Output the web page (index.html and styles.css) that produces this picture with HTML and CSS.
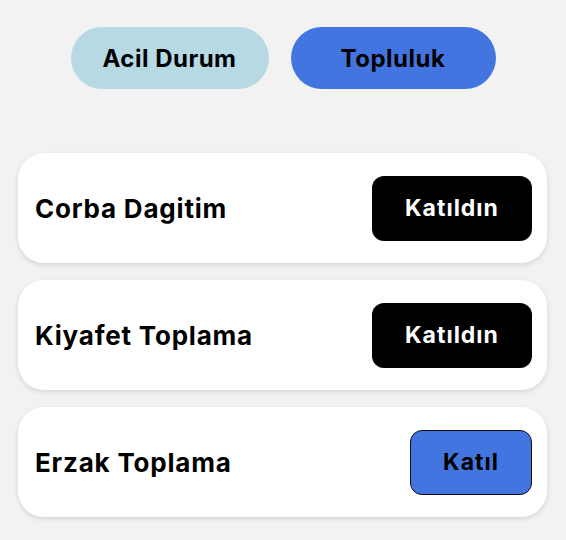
FILE: index.html
```html
<!DOCTYPE html>
<html lang="tr">
<head>
<meta charset="utf-8">
<link rel="stylesheet" href="styles.css">
</head>
<body>
<div class="page">
  <div class="tabs">
    <button class="pill pill-light">Acil Durum</button>
    <button class="pill pill-blue">Topluluk</button>
  </div>
  <div class="list">
    <div class="card">
      <span class="title">Corba Dagitim</span>
      <button class="act joined">Katıldın</button>
    </div>
    <div class="card">
      <span class="title">Kiyafet Toplama</span>
      <button class="act joined">Katıldın</button>
    </div>
    <div class="card">
      <span class="title">Erzak Toplama</span>
      <button class="act join">Katıl</button>
    </div>
  </div>
</div>
</body>
</html>
```

FILE: styles.css
```css
html, body {
  margin: 0;
  padding: 0;
  background: #f2f2f2;
}
body {
  font-family: Inter, "Noto Sans", "Liberation Sans", sans-serif;
  width: 566px;
  height: 540px;
  overflow: hidden;
}
.page {
  display: flex;
  flex-direction: column;
  padding: 27px 19px 0 18px;
}
.tabs {
  display: flex;
  justify-content: center;
  gap: 22px;
  margin-left: 1px;
}
.pill {
  height: 62px;
  border: none;
  border-radius: 31px;
  font-family: inherit;
  font-size: 24px;
  letter-spacing: 0.5px;
  font-weight: 700;
  color: #000;
  padding: 0;
}
.pill-light {
  width: 198px;
  background: #b6d9e4;
}
.pill-blue {
  width: 205px;
  background: #4375e0;
}
.list {
  margin-top: 64px;
  display: flex;
  flex-direction: column;
  gap: 17px;
}
.card {
  height: 110px;
  box-sizing: border-box;
  background: #fff;
  border-radius: 26px;
  display: flex;
  align-items: center;
  justify-content: space-between;
  padding: 0 15px 0 17px;
  box-shadow: 0 2px 5px rgba(0, 0, 0, 0.12);
}
.title {
  font-size: 26px;
  letter-spacing: 0.8px;
  font-weight: 700;
  color: #000;
}
.act {
  height: 65px;
  border-radius: 12px;
  font-family: inherit;
  font-size: 23px;
  letter-spacing: 1px;
  font-weight: 700;
  padding: 0;
  box-sizing: border-box;
}
.joined {
  width: 160px;
  background: #000;
  color: #fff;
  border: none;
}
.join {
  width: 122px;
  background: #4375e0;
  color: #000;
  border: 1.5px solid #111;
}
```
